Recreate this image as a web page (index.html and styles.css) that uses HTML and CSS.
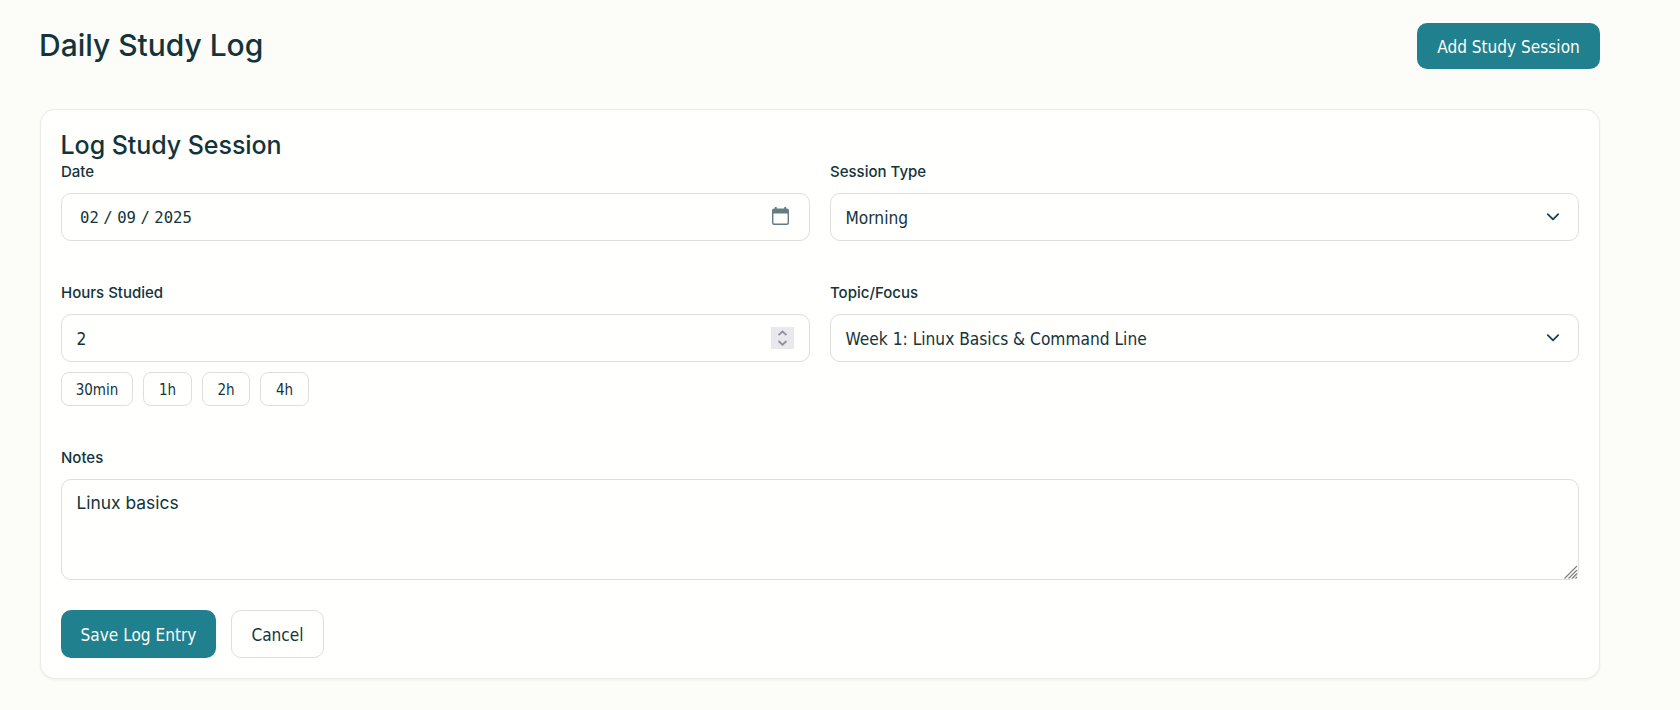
FILE: index.html
```html
<!DOCTYPE html>
<html lang="en">
<head>
<meta charset="utf-8">
<title>Daily Study Log</title>
<link rel="stylesheet" href="styles.css">
</head>
<body>
<main class="page">
  <header class="page-header">
    <h1 class="page-title">Daily Study Log</h1>
    <button class="btn btn-primary btn-add" type="button">Add Study Session</button>
  </header>
  <section class="card">
    <h3 class="card-title">Log Study Session</h3>
    <form class="form">
      <div class="row">
        <div class="group">
          <div class="label">Date</div>
          <div class="control date">
            <div class="date-parts"><span>02</span><span>/</span><span>09</span><span>/</span><span>2025</span></div>
            <svg class="calendar" width="17" height="18" viewBox="0 0 18 18" preserveAspectRatio="none"><path fill="#627c7f" fill-rule="evenodd" d="M3 0h2v1.500h8V0h2v1.500h.8A2.200 2.200 0 0 1 18 3.700v12A2.200 2.200 0 0 1 15.800 18H2.200A2.200 2.200 0 0 1 0 15.800V3.700a2.200 2.200 0 0 1 2.200-2.200H3zM1.500 6.500v9.200c0 .5.3.8.8.8h13.400c.5 0 .8-.3.800-.8V6.500z"/></svg>
          </div>
        </div>
        <div class="group">
          <div class="label">Session Type</div>
          <div class="control select"><span>Morning</span><svg class="chevron" width="14" height="10" viewBox="0 0 14 10"><path d="M1.800 2.200 7 7.400l5.200-5.200"/></svg></div>
        </div>
      </div>
      <div class="row row-hours">
        <div class="group">
          <div class="label">Hours Studied</div>
          <div class="control number"><span>2</span>
            <svg class="spinner" width="23" height="22" viewBox="0 0 23 22"><rect width="23" height="22"/><path d="m7.500 8.200 4-3.700 4 3.700M7.500 14l4 3.700 4-3.700"/></svg>
          </div>
          <div class="quick">
            <button class="chip chip-30" type="button">30min</button>
            <button class="chip" type="button">1h</button>
            <button class="chip chip-2" type="button">2h</button>
            <button class="chip" type="button">4h</button>
          </div>
        </div>
        <div class="group">
          <div class="label">Topic/Focus</div>
          <div class="control select"><span>Week 1: Linux Basics &amp; Command Line</span><svg class="chevron" width="14" height="10" viewBox="0 0 14 10"><path d="M1.800 2.200 7 7.400l5.200-5.200"/></svg></div>
        </div>
      </div>
      <div class="group">
        <div class="label">Notes</div>
        <div class="notes">Linux basics<svg class="grip" width="14" height="14" viewBox="0 0 14 14"><path d="M.5 13.500l12.500-12.500M4.500 13.500l8.500-8.500M8 13.500l5-5M11.500 13.500l1.500-1.500"/></svg></div>
      </div>
      <div class="actions">
        <button class="btn btn-primary btn-save" type="button">Save Log Entry</button>
        <button class="btn btn-outline" type="button">Cancel</button>
      </div>
    </form>
  </section>
</main>
</body>
</html>
```
FILE: styles.css
```css
* { box-sizing: border-box; }
body {
  margin: 0;
  min-height: 710px;
  background: #fcfcf9;
  color: #13343b;
  font-family: Inter, "Liberation Sans", sans-serif;
}
.page { width: 1600px; padding: 23px 0 0 40px; }
.page-header { display: flex; justify-content: space-between; align-items: center; height: 46px; }
.page-title { margin: 0 0 2px -1px; font-size: 30px; font-weight: 550; line-height: 36px; letter-spacing: -.02px; }
.btn {
  display: flex; align-items: center; justify-content: center;
  height: 48px; padding: 2px 0 0; border: 0; border-radius: 10px;
  font: 17.1px "DejaVu Sans Condensed", "DejaVu Sans", sans-serif;
}
.btn-primary { background: #21808d; color: #fcfcf9; }
.btn-add { width: 183px; height: 46px; }
.btn-save { width: 155px; }
.btn-outline { width: 93px; background: transparent; border: 1px solid #dededc; color: #13343b; }
.card {
  height: 570px; margin-top: 40px; padding: 20px;
  background: #fffffd; border: 1px solid #ebebe8; border-radius: 15px;
  box-shadow: 0 1px 3px rgba(0, 0, 0, .04), 0 1px 2px rgba(0, 0, 0, .02);
}
.card-title { margin: 0 0 0 -.5px; font-size: 25px; font-weight: 550; line-height: 30px; letter-spacing: -.05px; }
.row { display: grid; grid-template-columns: 749px 749px; gap: 20px; height: 121px; }
.row-hours { height: 165px; }
.label { height: 33px; padding-top: 1px; font-size: 15px; font-weight: 500; line-height: 22px; }
.control {
  display: flex; align-items: center; justify-content: space-between;
  height: 48px; padding: 0 15px 0 14.500px; border: 1px solid #dededc; border-radius: 10px;
  font: 17.2px "DejaVu Sans Condensed", "DejaVu Sans", sans-serif;
}
.control > span { padding-top: 2px; }
.date { padding: 0 20px 2px 18px; }
.date-parts { display: flex; gap: 4.500px; padding-top: 4px; font: 15.600px "DejaVu Sans Mono", monospace; }
.select { padding-right: 18px; }
.chevron path { fill: none; stroke: #134252; stroke-width: 1.800; stroke-linecap: round; stroke-linejoin: round; }
.spinner rect { fill: #e9e9ed; }
.spinner path { fill: none; stroke: #8f8f9d; stroke-width: 1.800; }
.quick { display: flex; gap: 10px; padding-top: 10px; }
.chip {
  width: 49px; height: 34px; padding: 2px 0 0; border: 1px solid #dededc; border-radius: 8px;
  background: transparent; color: #13343b;
  font: 15px "DejaVu Sans Condensed", "DejaVu Sans", sans-serif;
}
.chip-30 { width: 72px; }
.chip-2 { width: 48px; }
.notes {
  position: relative; height: 101px; padding: 10px 14.500px;
  border: 1px solid #dededc; border-radius: 10px; font-size: 17.400px; line-height: 26px;
}
.grip { position: absolute; right: 0; bottom: 0; }
.grip path { stroke: #808080; stroke-width: 1.200; }
.actions { display: flex; gap: 15px; padding-top: 30px; }
```
